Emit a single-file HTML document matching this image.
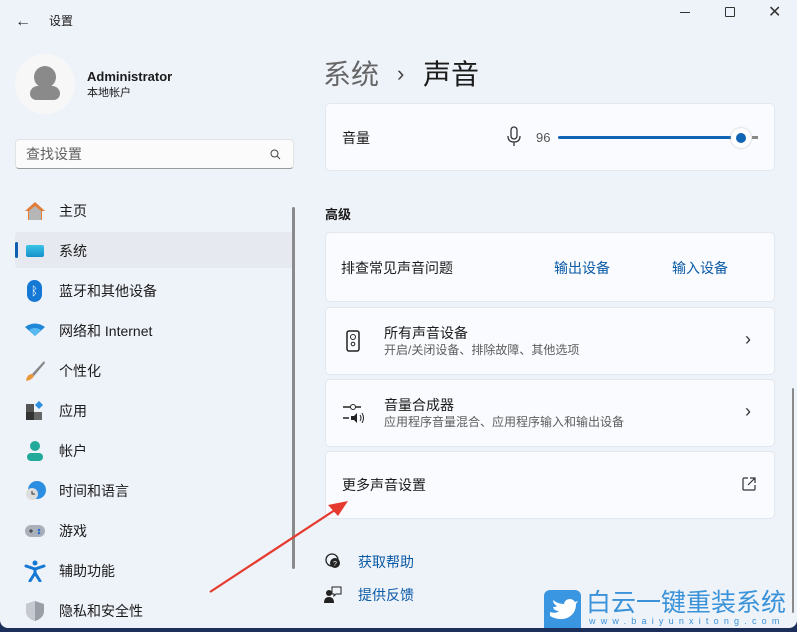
<!DOCTYPE html>
<html><head><meta charset="utf-8"><style>
*{margin:0;padding:0;box-sizing:border-box}
body{width:797px;height:632px;overflow:hidden;background:#1b2f5a;font-family:"Liberation Sans","Noto Sans CJK SC",sans-serif;color:#1b1b1b;position:relative;line-height:1.2}
.win{position:absolute;left:0;top:0;width:797px;height:628px;background:#eef2f9;border-radius:0 0 8px 8px;overflow:hidden}
.abs{position:absolute}
.nav{position:absolute;left:59px;font-size:14px}
.ic{position:absolute;left:24px;width:22px;height:22px}
.card{position:absolute;left:325px;width:450px;background:#f9fbfe;border:1px solid #e3e7ee;border-radius:5px}
.t14{font-size:14px}
.sub{font-size:12px;color:#5d5d5d}
.link{color:#0b5aa6;font-size:14px}
</style></head><body>
<div class="win">
<div class="abs" style="left:15px;top:12px;font-size:16px;color:#333">←</div>
<div class="abs" style="left:49px;top:14px;font-size:12px">设置</div>
<div class="abs" style="left:680px;top:12px;width:10px;border-top:1px solid #333"></div>
<div class="abs" style="left:725px;top:7px;width:10px;height:10px;border:1px solid #333;border-radius:1px"></div>
<div class="abs" style="left:768px;top:3px;font-size:16px;color:#333">✕</div>

<div class="abs" style="left:15px;top:54px;width:60px;height:60px;border-radius:50%;background:#f7f7f7"></div>
<div class="abs" style="left:34px;top:66px;width:22px;height:22px;border-radius:50%;background:#8a8a8a"></div>
<div class="abs" style="left:30px;top:86px;width:30px;height:14px;border-radius:10px 10px 8px 8px;background:#8a8a8a"></div>
<div class="abs" style="left:87px;top:69px;font-size:13px;font-weight:bold">Administrator</div>
<div class="abs" style="left:87px;top:87px;font-size:11px">本地帐户</div>

<div class="abs" style="left:15px;top:139px;width:279px;height:30px;background:#fbfbfc;border:1px solid #e2e2e2;border-bottom-color:#9a9a9a;border-radius:4px"></div>
<div class="abs" style="left:26px;top:146px;font-size:14px;color:#606060">查找设置</div>
<svg class="abs" style="left:270px;top:149px" width="11" height="11" viewBox="0 0 11 11"><circle cx="4.5" cy="4.5" r="3.5" fill="none" stroke="#444" stroke-width="1"/><path d="M7 7l3 3" stroke="#444"/></svg>

<div class="abs" style="left:15px;top:232px;width:278px;height:36px;background:#e6e9ef;border-radius:4px"></div>
<div class="abs" style="left:15px;top:242px;width:3px;height:16px;background:#0e5fb0;border-radius:2px"></div>

<svg class="ic" style="top:200px" viewBox="0 0 22 22"><path d="M11 2L1 11h3v9h14v-9h3z" fill="#e07d3a"/><path d="M5 11l6-5 6 5v9H5z" fill="#b6b6b6"/></svg>
<div class="nav" style="top:203px">主页</div>
<div class="ic" style="top:245px;height:12px;left:26px;width:18px;background:linear-gradient(#3ac4e6,#1690c9);border-radius:2px"></div>
<div class="nav" style="top:243px">系统</div>
<div class="ic" style="top:280px;width:15px;left:27px;height:22px;background:#1478d4;border-radius:8px;color:#fff;font-size:12px;text-align:center;line-height:22px">ᛒ</div>
<div class="nav" style="top:283px">蓝牙和其他设备</div>
<svg class="ic" style="top:320px" viewBox="0 0 22 22"><path d="M1 7q10-7 20 0l-10 9z" fill="#1e88d8"/><path d="M5 10q6-4 12 0l-6 6z" fill="#58b8f0"/></svg>
<div class="nav" style="top:323px">网络和 Internet</div>
<svg class="ic" style="top:360px" viewBox="0 0 22 22"><path d="M20 1L8 14l2 2L21 3z" fill="#888"/><path d="M8 14q-5 0-6 7 6-1 8-5z" fill="#e9973a"/></svg>
<div class="nav" style="top:363px">个性化</div>
<svg class="ic" style="top:400px" viewBox="0 0 22 22"><rect x="2" y="4" width="8" height="8" fill="#555"/><rect x="2" y="12" width="8" height="8" fill="#333"/><rect x="10" y="12" width="8" height="8" fill="#666"/><path d="M15 1l4 4-4 4-4-4z" fill="#2d8fe0"/></svg>
<div class="nav" style="top:403px">应用</div>
<svg class="ic" style="top:440px" viewBox="0 0 22 22"><circle cx="11" cy="6" r="5" fill="#21a99a"/><rect x="3" y="13" width="16" height="8" rx="4" fill="#21a99a"/></svg>
<div class="nav" style="top:443px">帐户</div>
<svg class="ic" style="top:480px" viewBox="0 0 22 22"><circle cx="13" cy="10" r="9" fill="#2c8ee0"/><circle cx="8" cy="14" r="6" fill="#ddd"/><path d="M8 11v3h3" stroke="#333" fill="none"/></svg>
<div class="nav" style="top:483px">时间和语言</div>
<svg class="ic" style="top:520px" viewBox="0 0 22 22"><rect x="1" y="5" width="20" height="12" rx="6" fill="#a9b0ba"/><path d="M5 11h4M7 9v4" stroke="#333"/><circle cx="15" cy="10" r="1.3" fill="#2d6fd0"/><circle cx="15" cy="13" r="1.3" fill="#2d6fd0"/></svg>
<div class="nav" style="top:523px">游戏</div>
<svg class="ic" style="top:560px" viewBox="0 0 22 22"><circle cx="11" cy="3" r="2.5" fill="#1478d4"/><path d="M2 6l9 3 9-3M11 9v4l-5 8M11 13l5 8" stroke="#1478d4" stroke-width="3" fill="none" stroke-linecap="round"/></svg>
<div class="nav" style="top:563px">辅助功能</div>
<svg class="ic" style="top:600px" viewBox="0 0 22 22"><path d="M11 1l9 3v7q0 7-9 10-9-3-9-10V4z" fill="#9a9ea6"/><path d="M11 1v20q-9-3-9-10V4z" fill="#c6c9cf"/></svg>
<div class="nav" style="top:603px">隐私和安全性</div>

<div class="abs" style="left:292px;top:207px;width:3px;height:362px;background:#8a8a8a;border-radius:2px"></div>
<div class="abs" style="left:792px;top:388px;width:2px;height:225px;background:#8a8a8a;border-radius:2px"></div>

<div class="abs" style="left:323px;top:58px;font-size:28px;color:#666">系统</div>
<div class="abs" style="left:397px;top:61px;font-size:22px;color:#444">›</div>
<div class="abs" style="left:423px;top:58px;font-size:28px;color:#1b1b1b">声音</div>

<div class="card" style="top:103px;height:68px"></div>
<div class="abs t14" style="left:342px;top:130px">音量</div>
<svg class="abs" style="left:506px;top:126px" width="16" height="22" viewBox="0 0 16 22"><rect x="5" y="1" width="6" height="12" rx="3" fill="none" stroke="#333" stroke-width="1.3"/><path d="M2 10q0 6 6 6t6-6M8 16v4" fill="none" stroke="#333" stroke-width="1.3"/></svg>
<div class="abs" style="left:536px;top:130px;font-size:13px;color:#555">96</div>
<div class="abs" style="left:558px;top:136px;width:180px;height:3px;background:#0f64b4;border-radius:2px"></div>
<div class="abs" style="left:752px;top:136px;width:6px;height:3px;background:#888"></div>
<div class="abs" style="left:731px;top:128px;width:20px;height:20px;border-radius:50%;background:#fff;box-shadow:0 0 2px #bbb"></div>
<div class="abs" style="left:736px;top:133px;width:10px;height:10px;border-radius:50%;background:#0f64b4"></div>

<div class="abs" style="left:325px;top:207px;font-size:13px;font-weight:bold">高级</div>
<div class="card" style="top:232px;height:70px"></div>
<div class="abs t14" style="left:341px;top:260px">排查常见声音问题</div>
<div class="abs link" style="left:554px;top:260px">输出设备</div>
<div class="abs link" style="left:672px;top:260px">输入设备</div>

<div class="card" style="top:307px;height:68px"></div>
<svg class="abs" style="left:345px;top:330px" width="16" height="22" viewBox="0 0 16 22"><rect x="2" y="1" width="12" height="20" rx="2" fill="none" stroke="#222" stroke-width="1.5"/><circle cx="8" cy="7" r="2.5" fill="none" stroke="#222"/><circle cx="8" cy="14" r="1.8" fill="none" stroke="#222"/></svg>
<div class="abs t14" style="left:384px;top:325px">所有声音设备</div>
<div class="abs sub" style="left:384px;top:343px">开启/关闭设备、排除故障、其他选项</div>
<div class="abs" style="left:745px;top:329px;font-size:18px;color:#333">›</div>

<div class="card" style="top:379px;height:68px"></div>
<svg class="abs" style="left:343px;top:403px" width="22" height="20" viewBox="0 0 22 20"><path d="M0 4h18M0 15h6" stroke="#222" stroke-width="1.4"/><circle cx="10" cy="4" r="2.5" fill="#fff" stroke="#222"/><path d="M8 13h3l3-3v10l-3-3H8z" fill="#222"/><path d="M17 12q2 3 0 6M19 10q3 5 0 10" stroke="#222" fill="none"/></svg>
<div class="abs t14" style="left:384px;top:397px">音量合成器</div>
<div class="abs sub" style="left:384px;top:415px">应用程序音量混合、应用程序输入和输出设备</div>
<div class="abs" style="left:745px;top:401px;font-size:18px;color:#333">›</div>

<div class="card" style="top:451px;height:68px"></div>
<div class="abs t14" style="left:342px;top:477px">更多声音设置</div>
<svg class="abs" style="left:742px;top:477px" width="14" height="14" viewBox="0 0 14 14"><path d="M6 1H2a1 1 0 0 0-1 1v10a1 1 0 0 0 1 1h10a1 1 0 0 0 1-1V8M8 1h5v5M13 1L6 8" fill="none" stroke="#333" stroke-width="1.2"/></svg>

<svg class="abs" style="left:324px;top:552px" width="18" height="18" viewBox="0 0 18 18"><circle cx="8" cy="8" r="6" fill="none" stroke="#222" stroke-width="1.3"/><circle cx="11" cy="11" r="5" fill="#222"/><text x="9" y="14" font-size="7" fill="#fff" font-family="Liberation Sans">?</text></svg>
<div class="abs link" style="left:358px;top:554px">获取帮助</div>
<svg class="abs" style="left:324px;top:586px" width="18" height="18" viewBox="0 0 18 18"><circle cx="5" cy="7" r="3" fill="#222"/><path d="M0 17q0-6 5-6t5 6z" fill="#222"/><path d="M8 1h9v7h-5l-2 2V8H8z" fill="none" stroke="#222"/></svg>
<div class="abs link" style="left:358px;top:587px">提供反馈</div>

<svg class="abs" style="left:0;top:0" width="797" height="628"><path d="M210 592L338 508" stroke="#e53a2e" stroke-width="2.2"/><path d="M348 501L328 505L338 516z" fill="#e53a2e"/></svg>

<div class="abs" style="left:544px;top:590px;width:37px;height:38px;background:#3a96e0;border-radius:6px 6px 0 0"></div>
<svg class="abs" style="left:548px;top:598px" width="30" height="24" viewBox="0 0 30 24"><path d="M2 14q6 2 9-1-5 0-6-4 3 0 4-1-4-2-4-6 5 4 11 4 1-5 6-5 3 0 5 3l3-1-2 3q0 10-9 14-8 3-17-2z" fill="#fff"/></svg>
<div class="abs" style="left:586px;top:588px;font-size:25px;color:#3a92d8">白云一键重装系统</div>
<div class="abs" style="left:589px;top:616px;font-size:9px;color:#3a92d8;letter-spacing:5.2px">www.baiyunxitong.com</div>
</div>
</body></html>
